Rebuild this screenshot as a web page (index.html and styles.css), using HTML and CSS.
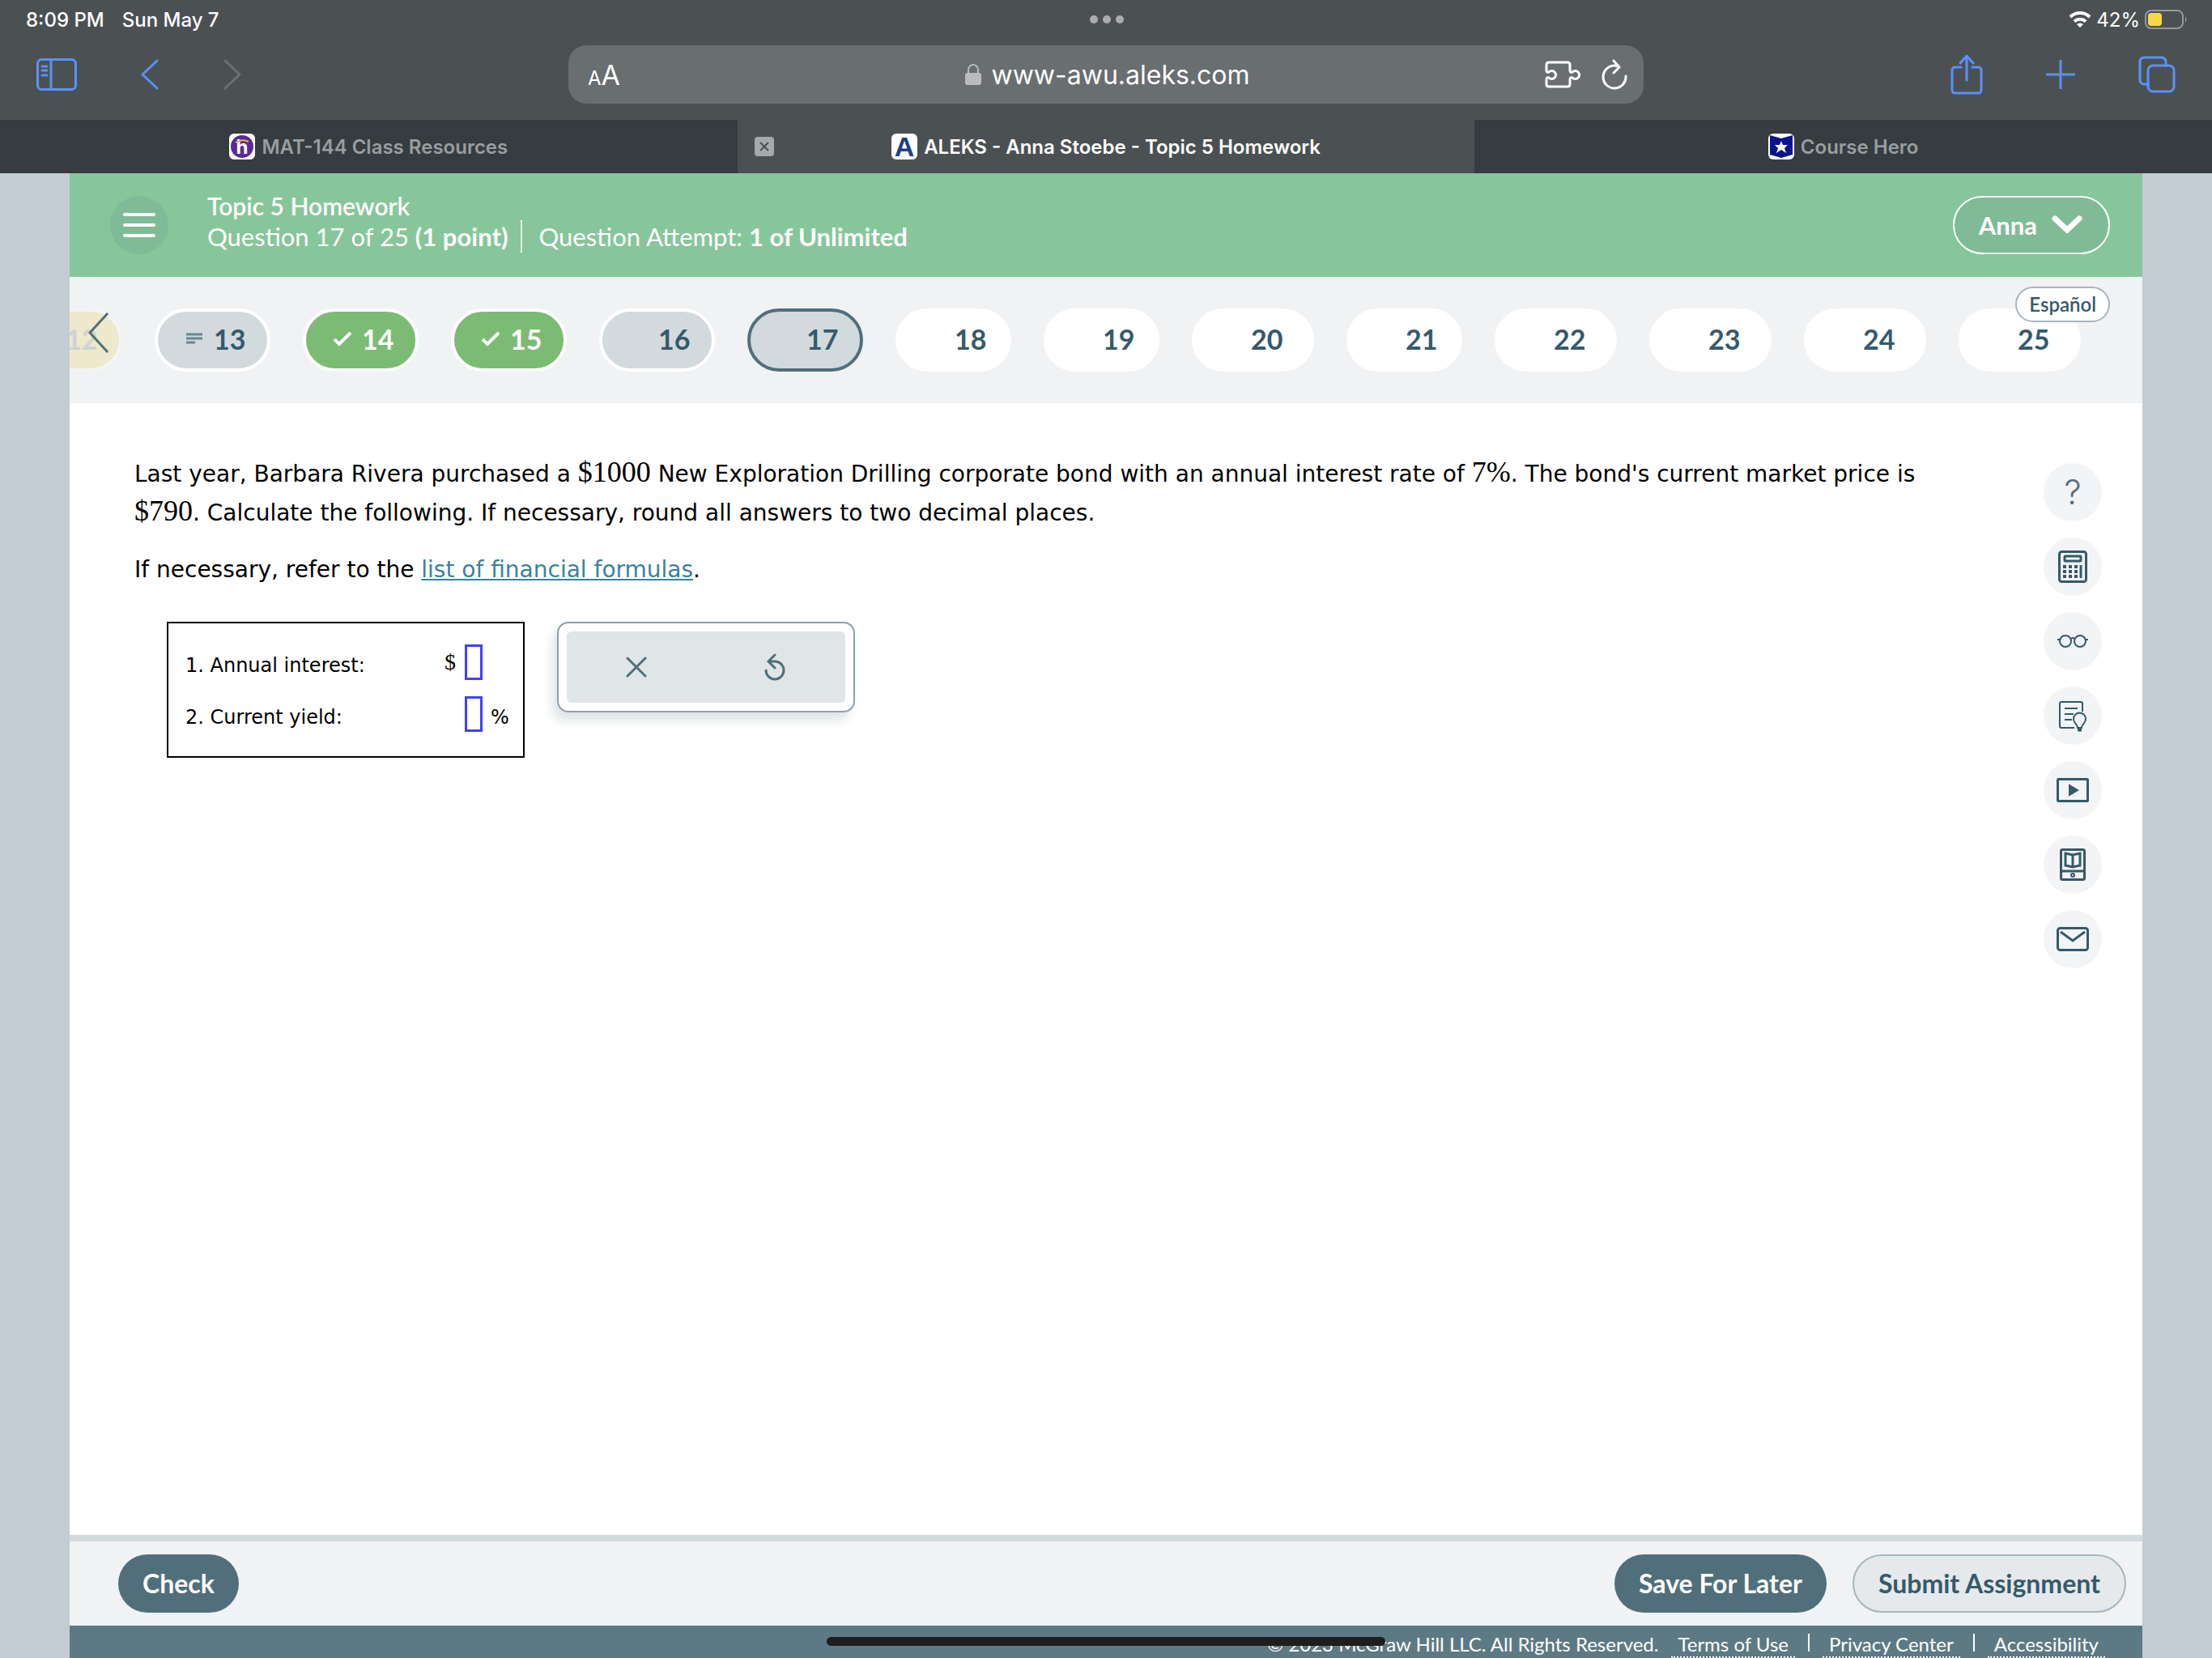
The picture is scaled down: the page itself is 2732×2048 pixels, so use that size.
FILE: index.html
```html
<!DOCTYPE html>
<html lang="en">
<head>
    <meta charset="UTF-8">
    <meta name="viewport" content="width=device-width, initial-scale=1.0">
    <title>ALEKS - Anna Stoebe - Topic 5 Homework</title>
    <link rel="stylesheet" href="styles.css">
</head>
<body>
    <div class="browser">
        <div class="status-bar">
            <div class="status-left"><span>8:09 PM</span><span>Sun May 7</span></div>
            <div class="dots"><i></i><i></i><i></i></div>
            <div class="status-right">
                <svg width="28" height="22" viewBox="0 0 28 22" fill="none" stroke="#fff" stroke-width="4"><path d="M2 8a17 17 0 0 1 24 0M7 13.500a10 10 0 0 1 14 0"/><path d="M14 21l-4-4a6 6 0 0 1 8 0z" fill="#fff" stroke="none"/></svg>
                <span class="percent">42%</span>
                <svg width="53" height="26" viewBox="0 0 53 26"><rect x="1" y="2" width="46" height="22" rx="7" fill="none" stroke="#95999b" stroke-width="2"/><rect x="4" y="5" width="17" height="16" rx="4" fill="#f9d84a"/><path d="M50 9q3 4 0 8z" fill="#95999b"/></svg>
            </div>
        </div>

        <div class="toolbar">
            <div class="tools-left">
                <button class="tool" aria-label="Sidebar"><svg width="50" height="40" viewBox="0 0 50 40"><rect x="1.500" y="1.500" width="47" height="37" rx="5"/><path d="M18 1v37M7 10h6M7 15h6M7 21h6"/></svg></button>
                <button class="tool" aria-label="Back"><svg width="24" height="40" viewBox="0 0 24 40"><path d="M21 3L3 20l18 17"/></svg></button>
                <button class="tool disabled" aria-label="Forward"><svg width="24" height="40" viewBox="0 0 24 40"><path d="M3 3l18 17L3 37"/></svg></button>
            </div>
            <div class="address">
                <button class="text-size" aria-label="Text size"><small>A</small>A</button>
                <div class="url">
                    <svg width="20" height="28" viewBox="0 0 20 28"><path d="M4 13V8a6 6 0 0 1 12 0v5" fill="none" stroke="#b9bbc0" stroke-width="2"/><rect y="12" width="20" height="15" rx="3" fill="#b9bbc0"/></svg>
                    <span>www-awu.aleks.com</span>
                </div>
                <div class="address-tools">
                    <button class="tool light" aria-label="Extensions"><svg width="44" height="34" viewBox="0 0 44 34"><path d="M5 2h23q3 0 3 3v7q0 3 3 2a5 5 0 1 1 0 7q-3-1-3 2v6q0 3-3 3H5q-3 0-3-3v-6q0-3 3-2a5 5 0 1 0 0-7q-3 1-3-2V5q0-3 3-3z"/></svg></button>
                    <button class="tool light" aria-label="Reload"><svg width="32" height="38" viewBox="0 0 32 38"><path d="M15 2l7 8-7 7M22 10q-3-2-6-2a14 14 0 1 0 14 13"/></svg></button>
                </div>
            </div>
            <div class="tools-right">
                <button class="tool" aria-label="Share"><svg width="40" height="50" viewBox="0 0 40 50"><path d="M13 16H6q-4 0-4 4v24q0 4 4 4h28q4 0 4-4V20q0-4-4-4h-7M20 32V3M12 11l8-9 8 9"/></svg></button>
                <button class="tool" aria-label="New tab"><svg width="36" height="36" viewBox="0 0 36 36"><path d="M18 1v34M1 18h34"/></svg></button>
                <button class="tool" aria-label="Tabs"><svg width="46" height="46" viewBox="0 0 46 46"><rect x="12" y="12" width="32" height="32" rx="6"/><path d="M12 35H8q-6 0-6-6V7q0-5 6-5h20q6 0 6 6v4"/></svg></button>
            </div>
        </div>

        <div class="tabs">
            <a class="tab" href="#">
                <svg width="32" height="32" viewBox="0 0 32 32"><rect width="32" height="32" rx="6" fill="#fff"/><circle cx="16" cy="16" r="14" fill="#5a2a97"/><text x="16" y="25" text-anchor="middle" class="logo-h">h</text><path d="M8 11q8-5 16-1" fill="none" stroke="#e5b93c" stroke-width="2"/></svg>
                <span>MAT-144 Class Resources</span>
            </a>
            <div class="tab active">
                <button class="close" aria-label="Close tab"><svg width="24" height="24" viewBox="0 0 24 24"><rect width="24" height="24" rx="4" fill="#a5abad"/><path d="M7 7l10 10M17 7L7 17" stroke="#4b5052" stroke-width="2"/></svg></button>
                <svg width="32" height="32" viewBox="0 0 32 32"><rect width="32" height="32" rx="6" fill="#fff"/><text x="16" y="28" text-anchor="middle" class="logo-a">A</text></svg>
                <span>ALEKS - Anna Stoebe - Topic 5 Homework</span>
            </div>
            <a class="tab" href="#">
                <svg width="32" height="32" viewBox="0 0 32 32"><rect width="32" height="32" rx="6" fill="#fff"/><path d="M2 2l14 4 14-4v24l-14 4-14-4z" fill="#09158f"/><path d="M16 9l2 5h6l-4 4 2 6-6-4-6 4 2-6-4-4h6z" fill="#fff"/></svg>
                <span>Course Hero</span>
            </a>
        </div>
    </div>

    <div class="page">
        <header class="header">
            <button class="menu" aria-label="Menu"><i></i><i></i><i></i></button>
            <div class="heading">
                <h1>Topic 5 Homework</h1>
                <p><span>Question 17 of 25 <b>(1 point)</b></span><span class="attempt">Question Attempt: <b>1 of Unlimited</b></span></p>
            </div>
            <button class="user">Anna
                <svg width="38" height="24" viewBox="0 0 38 24"><path d="M4 4l15 14L34 4" fill="none" stroke="#fff" stroke-width="7" stroke-linecap="round"/></svg>
            </button>
        </header>

        <nav class="questions">
            <button class="prev" aria-label="Previous questions"><svg width="26" height="50" viewBox="0 0 26 50"><path d="M24 1L2 25l22 24"/></svg></button>
            <a class="pill partial" href="#"><i></i>12</a>
            <a class="pill seen" href="#"><svg width="24" height="14" viewBox="0 0 24 14"><path d="M2 2h20M2 7h20M2 12h11" stroke="#6a8590" stroke-width="3"/></svg>13</a>
            <a class="pill done" href="#"><svg width="24" height="20" viewBox="0 0 24 20"><path d="M2 11l6 6L22 3" fill="none" stroke="#fff" stroke-width="4"/></svg>14</a>
            <a class="pill done" href="#"><svg width="24" height="20" viewBox="0 0 24 20"><path d="M2 11l6 6L22 3" fill="none" stroke="#fff" stroke-width="4"/></svg>15</a>
            <a class="pill seen" href="#"><i></i>16</a>
            <a class="pill seen current" href="#"><i></i>17</a>
            <a class="pill" href="#"><i></i>18</a>
            <a class="pill" href="#"><i></i>19</a>
            <a class="pill wide" href="#"><i></i>20</a>
            <a class="pill" href="#"><i></i>21</a>
            <a class="pill wide" href="#"><i></i>22</a>
            <a class="pill wide" href="#"><i></i>23</a>
            <a class="pill wide" href="#"><i></i>24</a>
            <a class="pill wide" href="#"><i></i>25</a>
            <button class="language">Español</button>
        </nav>

        <main class="content">
            <div class="problem">
                <p>Last year, Barbara Rivera purchased a <span class="math">$1000</span> New Exploration Drilling corporate bond with an annual interest rate of <span class="math">7%</span>. The bond's current market price is <span class="math">$790</span>. Calculate the following. If necessary, round all answers to two decimal places.</p>
                <p>If necessary, refer to the <a href="#">list of financial formulas</a>.</p>
                <div class="work">
                    <form class="answers">
                        <div class="row"><label for="interest">1. Annual interest:</label><span class="dollar">$</span><input type="text" id="interest"></div>
                        <div class="row"><label for="yield">2. Current yield:</label><input type="text" id="yield"><span class="unit">%</span></div>
                    </form>
                    <div class="keypad">
                        <div class="keys">
                            <button aria-label="Clear"><svg width="26" height="26" viewBox="0 0 26 26"><path d="M2 2l22 22M24 2L2 24"/></svg></button>
                            <button aria-label="Undo"><svg width="28" height="34" viewBox="0 0 28 34"><path d="M13 2L5 10l8 8M5 10h9a11 11 0 1 1-12 11"/></svg></button>
                        </div>
                    </div>
                </div>
            </div>
            <aside class="side">
                <button class="help" aria-label="Help">?</button>
                <button aria-label="Calculator"><svg width="36" height="40" viewBox="0 0 36 40"><rect x="1.500" y="1.500" width="33" height="37" rx="3" stroke-width="3"/><rect x="8" y="7" width="20" height="6" rx="1" stroke-width="3"/><path d="M6 20h18M6 26h18M6 32h18" stroke-width="4" stroke-dasharray="4 3"/><path d="M28 18v16" stroke-width="3"/></svg></button>
                <button aria-label="Read aloud"><svg width="38" height="18" viewBox="0 0 38 18"><circle cx="10" cy="9" r="7"/><circle cx="28" cy="9" r="7"/><path d="M0 7h3M35 7h3M17 6q2-2 4 0"/></svg></button>
                <button aria-label="Explanation"><svg width="36" height="40" viewBox="0 0 36 40"><path d="M20 35H4q-2 0-2-2V5q0-2 2-2h24q2 0 2 2v10M8 11h16M8 18h11M8 25h9"/><path d="M24 35c0-5-5-5-5-11a7 7 0 0 1 15 0c0 6-5 6-5 11z"/><path d="M24 37h5" stroke-width="5"/></svg></button>
                <button aria-label="Video"><svg width="40" height="30" viewBox="0 0 40 30"><rect x="1.500" y="1.500" width="37" height="27" rx="1" stroke-width="3"/><path d="M16 9l10 6-10 6z" fill="#355a69"/></svg></button>
                <button aria-label="Textbook"><svg width="32" height="40" viewBox="0 0 32 40"><rect x="1.500" y="1.500" width="29" height="37" rx="2" stroke-width="3"/><path d="M2 28h28M16 8L7 6v15l9 2 9-2V6zM16 8v15" stroke-width="3"/><circle cx="16" cy="33" r="2"/></svg></button>
                <button aria-label="Message"><svg width="40" height="30" viewBox="0 0 40 30"><rect x="1.500" y="1.500" width="37" height="27" rx="3" stroke-width="3"/><path d="M5 6l15 11L35 6" stroke-width="3"/></svg></button>
            </aside>
        </main>

        <div class="actions">
            <button class="btn">Check</button>
            <div class="actions-right">
                <button class="btn">Save For Later</button>
                <button class="btn outline">Submit Assignment</button>
            </div>
        </div>

        <footer class="footer">
            <span>© 2023 McGraw Hill LLC. All Rights Reserved.</span>
            <a href="#">Terms of Use</a>
            <i></i>
            <a href="#">Privacy Center</a>
            <i></i>
            <a href="#">Accessibility</a>
        </footer>
    </div>
    <div class="home-bar"></div>
</body>
</html>
```
FILE: styles.css
```css
* {
    box-sizing: border-box;
}
body {
    margin: 0;
    min-height: 100vh;
    display: flex;
    flex-direction: column;
    background: #c2cdd3;
    font-family: Lato, sans-serif;
    color: #000;
}
button {
    margin: 0;
    padding: 0;
    border: none;
    background: none;
    font: inherit;
    color: inherit;
    cursor: pointer;
}
a {
    color: inherit;
    text-decoration: none;
}
svg {
    display: block;
    flex-shrink: 0;
}

/* browser chrome */
.browser {
    background: #4b5153;
    color: #fff;
    font-family: Inter, sans-serif;
}
.status-bar {
    height: 48px;
    padding: 0 30px 0 32px;
    display: grid;
    grid-template-columns: 1fr auto 1fr;
    align-items: center;
    font-size: 24px;
    font-weight: 500;
}
.status-left {
    display: flex;
    gap: 22px;
}
.status-right {
    display: flex;
    justify-content: flex-end;
    align-items: center;
    gap: 6px;
}
.percent {
    font-weight: 400;
}
.dots {
    display: flex;
    gap: 6px;
}
.dots i {
    width: 10px;
    height: 10px;
    border-radius: 50%;
    background: #a9adaf;
}
.toolbar {
    height: 100px;
    padding: 8px 45px 20px;
    display: flex;
    align-items: center;
    justify-content: space-between;
}
.tool svg {
    fill: none;
    stroke: #5a91f7;
    stroke-width: 3;
    stroke-linecap: round;
    stroke-linejoin: round;
}
.tool.disabled svg {
    stroke: #6b7073;
}
.tool.light svg {
    stroke: #fff;
}
.tools-left, .tools-right {
    flex: 1;
    display: flex;
    align-items: center;
}
.tools-left {
    gap: 78px;
}
.tools-right {
    gap: 78px;
    justify-content: flex-end;
}
.address {
    width: 51%;
    max-width: 1328px;
    height: 72px;
    padding: 0 20px 0 24px;
    display: grid;
    grid-template-columns: 1fr auto 1fr;
    align-items: center;
    border-radius: 22px;
    background: #696e71;
}
.text-size {
    text-align: left;
    font-size: 34px;
}
.text-size small {
    font-size: 24px;
}
.url {
    display: flex;
    align-items: center;
    gap: 12px;
    font-size: 32px;
}
.address-tools {
    display: flex;
    align-items: center;
    justify-content: flex-end;
    gap: 26px;
}
.tabs {
    display: grid;
    grid-template-columns: 1fr 1fr 1fr;
    height: 66px;
}
.tab {
    position: relative;
    display: flex;
    align-items: center;
    justify-content: center;
    gap: 8px;
    background: #363c3f;
    color: #989ea1;
    font-size: 24px;
    font-weight: 600;
}
.tab.active {
    background: #4b5153;
    color: #fff;
}
.close {
    position: absolute;
    left: 21px;
}
.logo-h {
    font: bold 24px Inter, sans-serif;
    fill: #fff;
}
.logo-a {
    font: bold 34px "Liberation Sans", sans-serif;
    fill: #1c417f;
}

/* page */
.page {
    flex: 1;
    margin: 0 86px;
    display: flex;
    flex-direction: column;
    background: #fff;
}
.header {
    height: 128px;
    padding: 0 40px 0 50px;
    display: flex;
    align-items: center;
    background: #87c69b;
    color: #fff;
}
.menu {
    width: 72px;
    height: 72px;
    display: flex;
    flex-direction: column;
    align-items: center;
    justify-content: center;
    gap: 9px;
    border-radius: 50%;
    background: #80bb97;
}
.menu i {
    width: 40px;
    height: 4px;
    border-radius: 2px;
    background: #fff;
}
.heading {
    flex: 1;
    margin-left: 48px;
    padding-bottom: 8px;
}
h1 {
    margin: 0;
    font-size: 30px;
    line-height: 36px;
    font-weight: 600;
}
.heading p {
    display: flex;
    margin: 0;
    font-size: 31px;
    line-height: 40px;
}
.attempt {
    margin-left: 16px;
    padding-left: 20px;
    border-left: 2px solid #fff;
}
.user {
    height: 72px;
    padding: 0 32px 0 30px;
    display: flex;
    align-items: center;
    gap: 18px;
    border: 2px solid #fff;
    border-radius: 36px;
    background: #80bb97;
    font-size: 31px;
    font-weight: 700;
}
.questions {
    position: relative;
    height: 156px;
    display: flex;
    align-items: center;
    gap: 40px;
    background: #f0f2f4;
    overflow: hidden;
}
.pill {
    flex: none;
    width: 143px;
    height: 78px;
    display: flex;
    align-items: center;
    gap: 12px;
    padding: 0 0 4px 33px;
    border: 4px solid #fff;
    border-radius: 39px;
    background: #fff;
    color: #355a69;
    font-size: 34px;
    font-weight: 700;
}
.pill i {
    width: 24px;
}
.pill.wide {
    width: 151px;
}
.pill.seen {
    background: #d2dade;
}
.pill.current {
    border-color: #506f7a;
}
.pill.done {
    background: #7cbb74;
    color: #fff;
}
.pill.partial {
    margin-left: -78px;
    border-color: #f4f5f3;
    background: #eee8cc;
    color: #ccd3d3;
}
.prev {
    position: absolute;
    left: 23px;
    top: 44px;
}
.prev svg {
    fill: none;
    stroke: #506f7a;
    stroke-width: 3;
}
.language {
    position: absolute;
    top: 12px;
    right: 40px;
    height: 44px;
    padding: 0 15px;
    border: 2px solid #a6b6bd;
    border-radius: 22px;
    background: #fff;
    color: #355a69;
    font-size: 24px;
    font-weight: 600;
    line-height: 36px;
}

/* question */
.content {
    flex: 1;
    display: flex;
    padding: 64px 50px 0 80px;
    font-family: Verdana, "DejaVu Sans", sans-serif;
    font-size: 28px;
    line-height: 48px;
}
.problem {
    flex: 1;
    padding-right: 120px;
}
.problem p {
    margin: 0 0 22px;
}
.problem a {
    color: #3a8399;
    text-decoration: underline;
}
.math {
    font-family: "Liberation Serif", serif;
    font-size: 36px;
    line-height: 1;
}
.work {
    display: flex;
    align-items: flex-start;
    gap: 40px;
    margin: 40px 0 0 40px;
}
.answers {
    width: 442px;
    height: 168px;
    padding: 26px 0 0 21px;
    border: 2px solid #000;
    font-size: 24px;
}
.row {
    display: flex;
    align-items: center;
    height: 44px;
    margin-bottom: 20px;
}
.row label {
    width: 345px;
    padding-top: 8px;
}
.row .dollar {
    width: 25px;
    margin-left: -25px;
    font-family: "Liberation Serif", serif;
    font-size: 28px;
}
.row input {
    width: 22px;
    height: 44px;
    padding: 0;
    border: 3px solid #4040ff;
    border-radius: 0;
}
.unit {
    margin-left: 10px;
    padding-top: 8px;
}
.keypad {
    width: 368px;
    height: 112px;
    padding: 10px;
    border: 2px solid #8da1a9;
    border-radius: 14px;
    box-shadow: -6px 10px 14px #dfe4e6;
}
.keys {
    height: 100%;
    display: grid;
    grid-template-columns: 1fr 1fr;
    border-radius: 6px;
    background: #e0e5e8;
}
.keys button {
    display: flex;
    align-items: center;
    justify-content: center;
}
.keys svg {
    fill: none;
    stroke: #506f7a;
    stroke-width: 3;
    stroke-linecap: round;
}
.side {
    display: flex;
    flex-direction: column;
    gap: 20px;
    padding-top: 10px;
}
.side button {
    width: 72px;
    height: 72px;
    display: flex;
    align-items: center;
    justify-content: center;
    border-radius: 50%;
    background: #f2f4f6;
}
.side svg {
    fill: none;
    stroke: #355a69;
    stroke-width: 2;
}
.side .help {
    color: #506f7a;
    font-family: Inter, sans-serif;
    font-size: 42px;
    font-weight: 300;
}

/* bottom */
.actions {
    height: 112px;
    padding: 0 20px 0 60px;
    display: flex;
    align-items: center;
    justify-content: space-between;
    border-top: 8px solid #d2dadd;
    background: #f0f2f4;
}
.actions-right {
    display: flex;
    gap: 32px;
}
.btn {
    height: 72px;
    padding: 0 30px 2px;
    border-radius: 36px;
    background: #506f7a;
    color: #fff;
    font-size: 32px;
    font-weight: 700;
}
.btn.outline {
    border: 2px solid #a6b6bd;
    background: #e5e9ec;
    color: #355a69;
}
.footer {
    height: 40px;
    padding: 8px 46px 0;
    display: flex;
    justify-content: flex-end;
    gap: 16px;
    background: #5d7a84;
    color: #fff;
    font-size: 24px;
    line-height: 30px;
}
.footer a {
    padding: 0 8px;
    border-bottom: 2px dotted #fff;
}
.footer i {
    width: 2px;
    height: 22px;
    margin-top: 2px;
    background: #fff;
}
.home-bar {
    position: fixed;
    bottom: 15px;
    left: 50%;
    width: 690px;
    height: 11px;
    margin-left: -345px;
    border-radius: 6px;
    background: #1e1e1e;
}
```
